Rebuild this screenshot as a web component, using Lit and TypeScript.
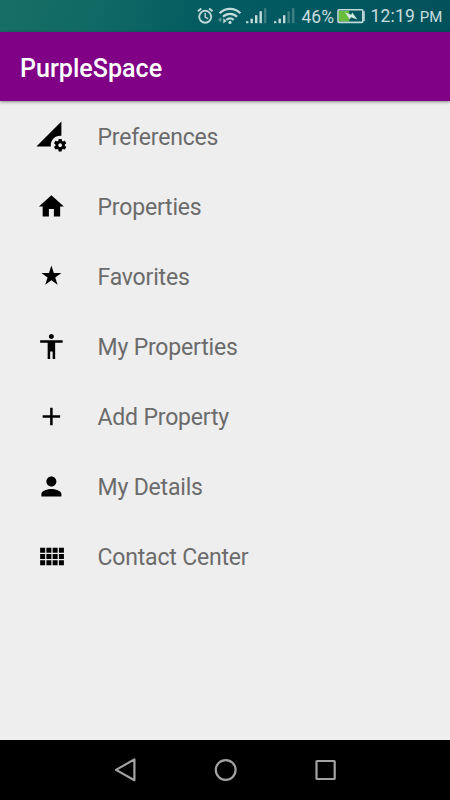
import { LitElement, html, css, svg } from "lit";
import { customElement, property } from "lit/decorators.js";

interface Entry {
  label: string;
  box: number;
  path: string;
}

const entries: Entry[] = [
  {
    label: "Preferences",
    box: 24,
    path: "M18.99 11.5c.34 0 .67.03 1 .07L20 0 0 20h11.56c-.04-.33-.07-.66-.07-1 0-4.14 3.36-7.5 7.5-7.5zm3.71 7.99c.02-.16.04-.32.04-.49 0-.17-.01-.33-.04-.49l1.06-.83c.09-.08.12-.21.06-.32l-1-1.73c-.06-.11-.19-.15-.31-.11l-1.24.5c-.26-.2-.54-.37-.85-.49l-.19-1.32c-.01-.12-.12-.21-.24-.21h-2c-.12 0-.23.09-.25.21l-.19 1.32c-.3.13-.59.29-.85.49l-1.24-.5c-.11-.04-.24 0-.31.11l-1 1.73c-.06.11-.04.24.06.32l1.06.83c-.02.16-.03.32-.03.49 0 .17.01.33.03.49l-1.06.83c-.09.08-.12.21-.06.32l1 1.73c.06.11.19.15.31.11l1.24-.5c.26.2.54.37.85.49l.19 1.32c.02.12.12.21.25.21h2c.12 0 .23-.09.24-.21l.19-1.32c.3-.13.59-.29.84-.49l1.25.5c.11.04.24 0 .31-.11l1-1.73c.06-.11.03-.24-.06-.32l-1.07-.83zm-3.71 1.01c-.83 0-1.5-.67-1.5-1.5s.67-1.5 1.5-1.5 1.5.67 1.5 1.5-.67 1.5-1.5 1.5z",
  },
  { label: "Properties", box: 24, path: "M10 20v-6h4v6h5v-8h3L12 3 2 12h3v8z" },
  {
    label: "Favorites",
    box: 18,
    path: "M9 11.3l3.71 2.7-1.42-4.36L15 7h-4.55L9 2.5 7.55 7H3l3.71 2.64L5.29 14z",
  },
  {
    label: "My Properties",
    box: 24,
    path: "M12 2c1.1 0 2 .9 2 2s-.9 2-2 2-2-.9-2-2 .9-2 2-2zm9 7h-6v13h-2v-6h-2v6H9V9H3V7h18v2z",
  },
  { label: "Add Property", box: 24, path: "M19 13h-6v6h-2v-6H5v-2h6V5h2v6h6v2z" },
  {
    label: "My Details",
    box: 24,
    path: "M12 12c2.21 0 4-1.79 4-4s-1.79-4-4-4-4 1.79-4 4 1.79 4 4 4zm0 2c-2.67 0-8 1.34-8 4v2h16v-2c0-2.66-5.33-4-8-4z",
  },
  {
    label: "Contact Center",
    box: 24,
    path: "M3 9h4V5H3v4zm0 5h4v-4H3v4zm5 0h4v-4H8v4zm5 0h4v-4h-4v4zM8 9h4V5H8v4zm5-4v4h4V5h-4zm5 9h4v-4h-4v4zM3 19h4v-4H3v4zm5 0h4v-4H8v4zm5 0h4v-4h-4v4zm5 0h4v-4h-4v4zm0-14v4h4V5h-4z",
  },
];

@customElement("signal-bars")
class SignalBars extends LitElement {
  @property({ type: Number }) level = 4;

  static styles = css`
    :host { display: block; width: 21px; height: 16px; }
    svg { display: block; }
    .on { fill: #c3dadb; }
    .off { fill: #3f7f83; }
  `;

  render() {
    const heights = [2, 4.5, 8, 12, 15];
    return html`<svg width="21" height="16" viewBox="0 0 21 16">
      ${heights.map(
        (h, i) => svg`<rect class=${i < this.level ? "on" : "off"} x=${i * 4.5} y=${15.2 - h} width="2.4" height=${h} />`
      )}
    </svg>`;
  }
}

@customElement("status-bar")
class StatusBar extends LitElement {
  static styles = css`
    :host {
      display: flex;
      align-items: center;
      height: 32px;
      box-sizing: border-box;
      padding-left: 197px;
      background: linear-gradient(100deg, #176e66 0%, #116965 22%, #045b60 45%, #025860 70%, #02515b 100%);
      color: #c9dddf;
      font: 17.5px/32px Roboto, sans-serif;
      white-space: nowrap;
    }
    svg { display: block; flex: none; }
    .wifi { margin-left: 4px; }
    .sig1 { margin-left: 4px; }
    .sig2 { margin-left: 6.5px; }
    .pct { margin-left: 7px; width: 33px; padding-top: 1px; }
    .battery { margin-left: 2px; }
    .time { margin-left: 5px; padding-top: 1px; letter-spacing: 0.2px; }
    .pm { font-size: 15px; }
  `;

  render() {
    return html`
      <svg width="17" height="18" viewBox="0 0 17 18" fill="none" stroke="#c3dadb" stroke-width="1.9">
        <circle cx="8.2" cy="9.8" r="6" />
        <path d="M.9 4.2 4.3 1.4M15.5 4.2 12.1 1.4" />
        <path d="M8.2 6v4.2l3 1.6" stroke-width="1.4" />
      </svg>
      <svg class="wifi" width="24" height="18" viewBox="0 0 24 18" fill="none" stroke="#c3dadb" stroke-width="2.3">
        <path d="M1.6 6.3C7.4.5 16.6.5 22.4 6.3" />
        <path d="M5 9.8c3.9-3.9 10.1-3.9 14 0" />
        <path d="M8.3 13c2.1-2 5.3-2 7.4 0" />
        <circle cx="12" cy="15.4" r="1.6" fill="#c3dadb" stroke="none" />
        <path d="M3.4 10v5.5L0 12.8z" fill="#5f9699" stroke="none" />
        <path d="M5.3 11.2v5.4l3.2-2.7z" fill="#c3dadb" stroke="none" />
      </svg>
      <signal-bars class="sig1" .level=${4}></signal-bars>
      <signal-bars class="sig2" .level=${3}></signal-bars>
      <span class="pct">46%</span>
      <svg class="battery" width="29" height="16" viewBox="0 0 29 16">
        <rect x="1.8" y="2.8" width="10.5" height="10.6" fill="#67bd3b" />
        <rect x="1" y="1.8" width="24.8" height="12.6" rx="1" fill="none" stroke="#c3dadb" stroke-width="1.6" />
        <path d="M27 3.3v9.6" stroke="#c3dadb" stroke-width="1.6" />
        <path d="M7.8 4.2 14.2 6.8 15.2 4.4 20.4 11.6 13.9 9.2 12.8 11.4z" fill="#d5e8e2" />
      </svg>
      <span class="time">12:19 <span class="pm">PM</span></span>
    `;
  }
}

@customElement("menu-row")
class MenuRow extends LitElement {
  @property({ attribute: false }) entry!: Entry;

  static styles = css`
    :host {
      display: flex;
      align-items: center;
      gap: 31.5px;
      height: 70px;
      padding-left: 36px;
      font: 23px/30px Roboto, sans-serif;
      letter-spacing: -0.18px;
      color: #6b6b6b;
      white-space: nowrap;
    }
    svg { display: block; flex: none; fill: #000; overflow: visible; }
    .label { padding-top: 3px; }
  `;

  render() {
    const { box, path, label } = this.entry;
    const shift = (-0.4 * box) / 30;
    return html`<svg width="30" height="30" viewBox="${shift} ${shift} ${box} ${box}"><path d=${path} /></svg>
      <span class="label">${label}</span>`;
  }
}

@customElement("app-root")
class AppRoot extends LitElement {
  static styles = css`
    :host {
      display: flex;
      flex-direction: column;
      width: 450px;
      height: 800px;
      overflow: hidden;
      background: #eee;
    }
    .bar {
      height: 69px;
      flex: none;
      display: flex;
      align-items: center;
      box-sizing: border-box;
      padding: 4px 0 0 20px;
      background: #800086;
      box-shadow: 0 1px 3px rgba(0, 0, 0, 0.45);
      color: #fff;
      font: 500 25.1px/30px Roboto, sans-serif;
    }
    .list { flex: 1; }
    .nav {
      height: 60px;
      flex: none;
      display: flex;
      justify-content: center;
      align-items: center;
      gap: 76px;
      background: #000;
    }
    .nav svg { display: block; fill: none; stroke: #a3a3a3; stroke-width: 2.2; }
  `;

  render() {
    return html`
      <status-bar></status-bar>
      <header class="bar">PurpleSpace</header>
      <main class="list">${entries.map((e) => html`<menu-row .entry=${e}></menu-row>`)}</main>
      <nav class="nav">
        <svg width="24" height="24" viewBox="0 0 24 24"><path d="M21.4 1.4v20.8L3 11.9z" stroke-linejoin="round" /></svg>
        <svg width="24" height="24" viewBox="0 0 24 24"><circle cx="12.7" cy="12" r="9.9" /></svg>
        <svg width="24" height="24" viewBox="0 0 24 24"><rect x="3.5" y="3" width="18.2" height="18" rx="0.6" /></svg>
      </nav>
    `;
  }
}
